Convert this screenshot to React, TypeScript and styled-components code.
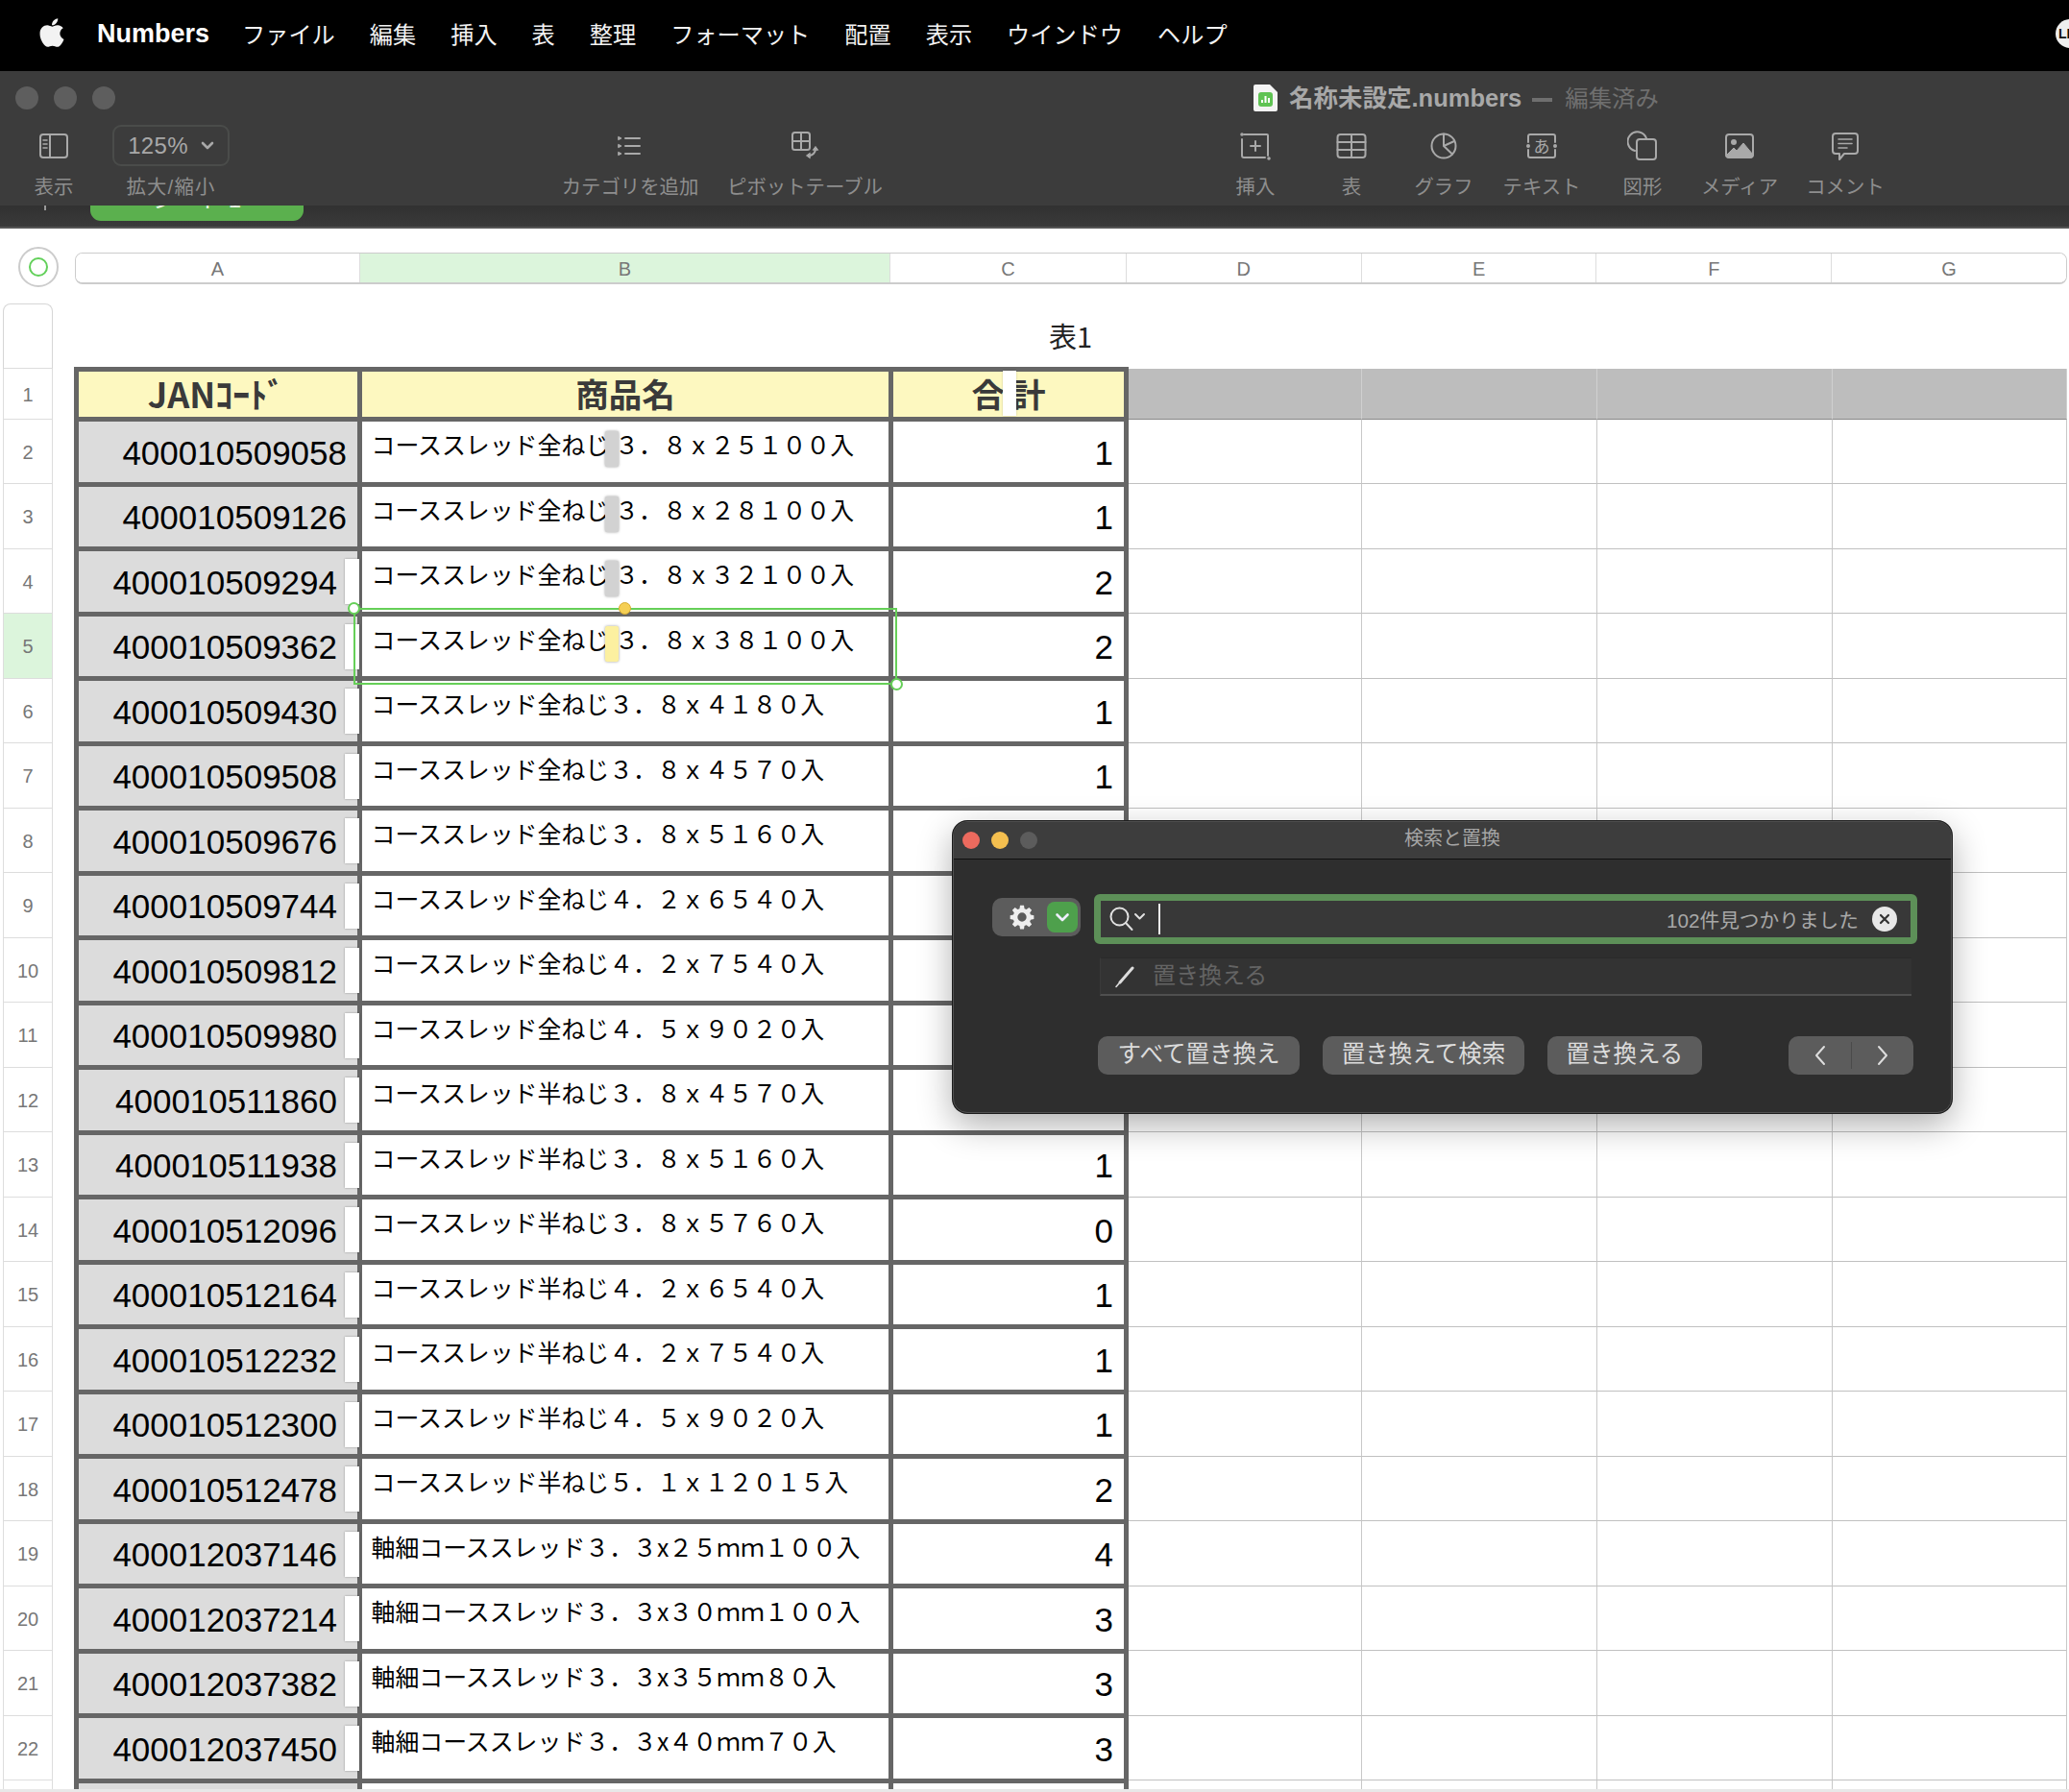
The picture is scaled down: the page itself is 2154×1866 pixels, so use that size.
import React from "react";
import styled, {createGlobalStyle} from "styled-components";
import {FaApple} from "react-icons/fa";

const UI_FONT = `"Liberation Sans", "Noto Sans CJK JP", sans-serif`;
const CJK_FONT = `"Noto Sans CJK JP", "Liberation Sans", sans-serif`;

const GlobalStyle = createGlobalStyle`
  html, body {
    margin: 0;
    padding: 0;
    background: #fff;
    font-family: ${UI_FONT};
  }
`;

const Page = styled.div`
  position: relative;
  width: 2154px;
  height: 1866px;
  overflow: hidden;
  background: #fff;
`;

const MenuBar = styled.div`
  height: 74px;
  box-sizing: border-box;
  background: #000;
  display: flex;
  align-items: center;
  gap: 36px;
  padding: 0 0 6px 40px;
  color: #f2f2f2;
  font-size: 24.2px;
  position: relative;
  svg { margin: 0 -6px 0 -3px; }
`;

const AppName = styled.span`
  font-size: 27px;
  font-weight: 700;
  color: #fff;
  margin: 3px -2px 0 0;
`;

const UserBadge = styled.div`
  position: absolute;
  left: 2140px;
  top: 20px;
  width: 30px;
  height: 30px;
  border-radius: 50%;
  background: #eee;
  color: #111;
  font-size: 14px;
  font-weight: 700;
  line-height: 30px;
  padding-left: 3px;
  box-sizing: border-box;
`;

const Toolbar = styled.div`
  height: 140px;
  background: #3c3c3c;
  display: flex;
  flex-direction: column;
`;

const TitleRow = styled.div`
  height: 56px;
  display: flex;
  align-items: center;
  padding-left: 16px;
`;

const Light = styled.div<{$color: string; $size: number}>`
  width: ${p => p.$size}px;
  height: ${p => p.$size}px;
  border-radius: 50%;
  background: ${p => p.$color};
`;

const Lights = styled.div<{$gap: number}>`
  display: flex;
  gap: ${p => p.$gap}px;
`;

const DocTitle = styled.div`
  margin-left: 1185px;
  display: flex;
  align-items: center;
  gap: 12px;
  font-size: 25.5px;
  font-weight: 700;
  color: #a8a8a8;
`;

const DocName = styled.span`
  margin-top: -6px;
`;

const Edited = styled.span`
  font-size: 24.4px;
  font-weight: 400;
  color: #6f6f6f;
  margin-left: 13px;
`;

const Dash = styled.span`
  display: inline-block;
  width: 21px;
  height: 4px;
  background: #6f6f6f;
  margin-left: 11px;
  vertical-align: middle;
`;

const ToolRow = styled.div`
  display: flex;
  padding-left: 16px;
`;

const ToolItem = styled.div<{$w: number; $ml?: number}>`
  width: ${p => p.$w}px;
  margin-left: ${p => p.$ml ?? 0}px;
  display: flex;
  flex-direction: column;
  align-items: center;
  color: #aaa;
`;

const ToolSlot = styled.div`
  height: 43px;
  display: flex;
  align-items: center;
  justify-content: center;
`;

const ToolLabel = styled.div<{$spread?: boolean}>`
  margin-top: 10px;
  height: 24px;
  line-height: 24px;
  font-size: 20.4px;
  letter-spacing: ${p => (p.$spread ? 1.2 : 0)}px;
  color: #8e8e8e;
  white-space: nowrap;
`;

const ZoomBox = styled.div`
  width: 122px;
  height: 43px;
  box-sizing: border-box;
  border: 2px solid #4a4c4a;
  border-radius: 9px;
  display: flex;
  align-items: center;
  justify-content: center;
  gap: 13px;
`;

const ZoomValue = styled.span`
  font-size: 24px;
  letter-spacing: 0.3px;
  color: #a8a8a8;
`;

const TabStrip = styled.div`
  height: 22px;
  background: linear-gradient(#313131, #3a3a3a);
  border-bottom: 2px solid #555;
  display: flex;
  align-items: flex-start;
  overflow: hidden;
`;

const TabPlus = styled.div`
  width: 2px;
  height: 5px;
  margin-left: 46px;
  background: #999;
`;

const SheetTab = styled.div`
  width: 222px;
  height: 16px;
  margin-left: 46px;
  background: #5bb04e;
  border-radius: 0 0 11px 11px;
  overflow: hidden;
  text-align: center;
  color: #e8f5e4;
  font-size: 24px;
  line-height: 24px;
  span { display: block; margin-top: -18px; }
`;

const Sheet = styled.div`
  display: flex;
  flex-direction: column;
`;

const ColumnRow = styled.div`
  display: flex;
  align-items: flex-start;
  gap: 17px;
  padding: 19px 0 0 19px;
`;

const SelectAll = styled.div`
  width: 42px;
  height: 42px;
  box-sizing: border-box;
  border: 2px solid #ccc;
  border-radius: 50%;
  display: flex;
  align-items: center;
  justify-content: center;
  &::after {
    content: "";
    width: 20px;
    height: 20px;
    box-sizing: border-box;
    border: 2px solid #62d05a;
    border-radius: 50%;
  }
`;

const ColumnHeader = styled.div`
  display: flex;
  width: 2074px;
  height: 33px;
  margin-top: 6px;
  box-sizing: border-box;
  border: 1px solid #ccc;
  border-bottom-width: 2px;
  border-radius: 8px;
  overflow: hidden;
`;

const ColumnLabel = styled.div<{$w: number; $active?: boolean}>`
  width: ${p => p.$w}px;
  box-sizing: border-box;
  border-right: 1px solid #ddd;
  background: ${p => (p.$active ? "#dcf5dc" : "#fff")};
  text-align: center;
  font-size: 20px;
  line-height: 32px;
  color: #777;
  &:last-child { border-right: none; }
`;

const SheetBody = styled.div`
  display: flex;
  margin: 17px 0 0 3px;
`;

const RowHeader = styled.div`
  width: 52px;
  display: flex;
  flex-direction: column;
  flex: none;
`;

const RowCorner = styled.div`
  height: 68px;
  box-sizing: border-box;
  border: 1px solid #d6d6d6;
  border-bottom-color: #ddd;
  border-radius: 8px 8px 0 0;
`;

const RowLabel = styled.div<{$h: number; $active?: boolean}>`
  height: ${p => p.$h}px;
  box-sizing: border-box;
  border: 1px solid #ddd;
  border-top: none;
  padding-top: 3px;
  background: ${p => (p.$active ? "#dcf5dc" : "#fff")};
  display: flex;
  align-items: center;
  justify-content: center;
  font-size: 20px;
  color: #777;
`;

const Canvas = styled.div`
  margin-left: 22px;
  width: 2075px;
`;

const TableTitle = styled.div`
  height: 66px;
  display: flex;
  align-items: center;
  justify-content: center;
  font-family: ${CJK_FONT};
  font-size: 29px;
  color: #222;
`;

const Tables = styled.div`
  display: flex;
  align-items: flex-start;
  position: relative;
`;

const DataTable = styled.div`
  display: grid;
  grid-template-columns: 290px 548px 240px;
  grid-template-rows: 47px repeat(23, 62.5px);
  gap: 5px;
  padding: 5px;
  background: #666;
  flex: none;
`;

const HeadCell = styled.div<{$size?: number; $shift?: number}>`
  position: relative;
  background: #fdf8c0;
  display: flex;
  align-items: center;
  justify-content: center;
  padding: 0 ${p => p.$shift ?? 0}px 4px 0;
  box-sizing: border-box;
  font-family: ${CJK_FONT};
  font-size: ${p => p.$size ?? 34.5}px;
  font-weight: 700;
  color: #3a3a3a;
  white-space: pre;
`;

const HeadGap = styled.div`
  position: absolute;
  left: 114px;
  top: -1px;
  width: 14px;
  height: 47px;
  background: #fff;
  box-shadow: 0 0 2px rgba(0, 0, 0, .2);
`;

const CodeCell = styled.div<{$boxed: boolean}>`
  position: relative;
  box-sizing: border-box;
  background: #dcdcdc;
  display: flex;
  align-items: center;
  justify-content: flex-end;
  padding: 3px ${p => (p.$boxed ? 21 : 11)}px 0 0;
  font-size: 35px;
  color: #000;
`;

const CodeBox = styled.div`
  position: absolute;
  right: -2px;
  top: 8px;
  width: 15px;
  height: 47px;
  background: #fff;
  box-shadow: 0 0 2px rgba(0, 0, 0, .35);
`;

const NameCell = styled.div`
  background: #fff;
  padding: 5px 0 0 9.5px;
  font-family: ${CJK_FONT};
  font-size: 24.9px;
  font-weight: 400;
  line-height: 36px;
  color: #000;
  white-space: nowrap;
`;

const CharMark = styled.span<{$active: boolean}>`
  display: inline-block;
  position: relative;
  width: 6px;
  height: 0;
  &::after {
    content: "";
    position: absolute;
    left: -4px;
    top: -24px;
    width: 14px;
    height: 37px;
    border-radius: 2px;
    background: ${p => (p.$active ? "#fcf0a0" : "#d2d2d2")};
    box-shadow: 0 0 3px rgba(0, 0, 0, .4);
  }
`;

const TotalCell = styled.div`
  background: #fff;
  box-sizing: border-box;
  display: flex;
  align-items: center;
  justify-content: flex-end;
  padding: 3px 11px 0 0;
  font-size: 35px;
  color: #000;
`;

const EmptyGrid = styled.div`
  margin-top: 2px;
  display: grid;
  grid-template-columns: 243px 245px 245px 244px;
  grid-template-rows: 52.5px repeat(23, 67.5px);
  flex: none;
`;

const EmptyCell = styled.div<{$band: boolean}>`
  box-sizing: border-box;
  background: ${p => (p.$band ? "#bdbdbd" : "#fff")};
  border-right: 1px solid ${p => (p.$band ? "#d0d0d0" : "#c8c8c8")};
  border-bottom: ${p => (p.$band ? "1.5px solid #888" : "1px solid #c0c0c0")};
`;

const Selection = styled.div`
  position: absolute;
  left: 291px;
  top: 251px;
  width: 566px;
  height: 80px;
  box-sizing: border-box;
  border: 2px solid #66cf58;
`;

const Handle = styled.div<{$end?: boolean}>`
  position: absolute;
  width: 13px;
  height: 13px;
  box-sizing: border-box;
  border: 2px solid #66cf58;
  border-radius: 50%;
  background: #fff;
  left: ${p => (p.$end ? "auto" : "-8px")};
  right: ${p => (p.$end ? "-8px" : "auto")};
  top: ${p => (p.$end ? "auto" : "-8px")};
  bottom: ${p => (p.$end ? "-8px" : "auto")};
`;

const SelectionDot = styled.div`
  position: absolute;
  left: 274px;
  top: -8px;
  width: 11px;
  height: 11px;
  border: 1px solid #d8ac30;
  border-radius: 50%;
  background: #f5cf55;
`;

const BottomEdge = styled.div`
  position: absolute;
  left: 0;
  right: 0;
  bottom: 0;
  height: 3px;
  background: #e8e8e8;
`;

const Dialog = styled.div`
  position: absolute;
  left: 992px;
  top: 855px;
  width: 1040px;
  height: 304px;
  box-sizing: border-box;
  background: #2e2e2e;
  border-radius: 15px;
  border: 1px solid #4f4f4f;
  box-shadow: 0 0 0 1px #1c1c1c, 0 12px 36px rgba(0, 0, 0, .32);
  overflow: hidden;
`;

const DialogBar = styled.div`
  position: relative;
  height: 38px;
  background: #3d3d3d;
  border-bottom: 1px solid #101010;
  text-align: center;
  line-height: 35px;
  font-size: 20px;
  color: #a6a6a6;
`;

const DialogLights = styled(Lights)`
  position: absolute;
  left: 9px;
  top: 10px;
`;

const DialogBody = styled.div`
  padding: 36px 35px 0 40px;
`;

const SearchRow = styled.div`
  display: flex;
  gap: 14px;
  align-items: flex-start;
`;

const GearGroup = styled.div`
  margin-top: 4px;
  width: 92px;
  height: 40px;
  box-sizing: border-box;
  border-radius: 10px;
  background: #5c5c5c;
  display: flex;
  align-items: center;
  padding: 0 3px 0 17px;
  justify-content: space-between;
`;

const GreenDrop = styled.div`
  width: 32px;
  height: 32px;
  border-radius: 8px;
  background: #4ea04c;
  display: flex;
  align-items: center;
  justify-content: center;
`;

const SearchField = styled.div`
  width: 857px;
  height: 52px;
  box-sizing: border-box;
  border: 7px solid #5d9058;
  border-radius: 6px;
  background: #383838;
  display: flex;
  align-items: center;
  padding: 0 14px 0 9px;
`;

const Caret = styled.div`
  width: 2px;
  height: 32px;
  background: #eee;
  margin-left: 11px;
`;

const FoundCount = styled.div`
  margin-left: auto;
  font-size: 20.7px;
  color: #a8a8a8;
`;

const ClearButton = styled.div`
  width: 26px;
  height: 26px;
  margin-left: 14px;
  border-radius: 50%;
  background: #e8e8e8;
  display: flex;
  align-items: center;
  justify-content: center;
`;

const ReplaceField = styled.div`
  margin: 14px 6px 0 112px;
  height: 40px;
  box-sizing: border-box;
  background: #333;
  border-top: 1px solid #2a2a2a;
  border-bottom: 2px solid #4f4f4f;
  border-left: 1px solid #3a3a3a;
  display: flex;
  align-items: center;
  padding: 0 0 7px 14px;
  gap: 18px;
  font-size: 24px;
  color: #646464;
  svg { margin-top: 7px; }
`;

const ButtonRow = styled.div`
  margin: 42px 4px 0 110px;
  display: flex;
  gap: 24px;
`;

const DialogButton = styled.div<{$w: number}>`
  width: ${p => p.$w}px;
  height: 40px;
  border-radius: 10px;
  background: #5c5c5c;
  color: #dcdcdc;
  font-size: 24.5px;
  line-height: 37px;
  text-align: center;
  white-space: nowrap;
`;

const NavButton = styled.div`
  margin-left: auto;
  width: 130px;
  height: 40px;
  border-radius: 10px;
  background: #5c5c5c;
  display: flex;
  align-items: center;
  justify-content: space-around;
  position: relative;
  &::after {
    content: "";
    position: absolute;
    left: 65px;
    top: 6px;
    width: 1px;
    height: 28px;
    background: #4a4a4a;
  }
`;

const MENU = ["ファイル", "編集", "挿入", "表", "整理", "フォーマット", "配置", "表示", "ウインドウ", "ヘルプ"];

const COLUMNS: [string, number][] = [["A", 296], ["B", 553], ["C", 246], ["D", 245], ["E", 245], ["F", 245], ["G", 244]];

// [code, name, total]
const ROWS: [string, string, string][] = [
    ["400010509058", "３．８ｘ２５１００入", "1"],
    ["400010509126", "３．８ｘ２８１００入", "1"],
    ["400010509294", "３．８ｘ３２１００入", "2"],
    ["400010509362", "３．８ｘ３８１００入", "2"],
    ["400010509430", "コーススレッド全ねじ３．８ｘ４１８０入", "1"],
    ["400010509508", "コーススレッド全ねじ３．８ｘ４５７０入", "1"],
    ["400010509676", "コーススレッド全ねじ３．８ｘ５１６０入", "1"],
    ["400010509744", "コーススレッド全ねじ４．２ｘ６５４０入", "1"],
    ["400010509812", "コーススレッド全ねじ４．２ｘ７５４０入", "1"],
    ["400010509980", "コーススレッド全ねじ４．５ｘ９０２０入", "1"],
    ["400010511860", "コーススレッド半ねじ３．８ｘ４５７０入", "1"],
    ["400010511938", "コーススレッド半ねじ３．８ｘ５１６０入", "1"],
    ["400010512096", "コーススレッド半ねじ３．８ｘ５７６０入", "0"],
    ["400010512164", "コーススレッド半ねじ４．２ｘ６５４０入", "1"],
    ["400010512232", "コーススレッド半ねじ４．２ｘ７５４０入", "1"],
    ["400010512300", "コーススレッド半ねじ４．５ｘ９０２０入", "1"],
    ["400010512478", "コーススレッド半ねじ５．１ｘ１２０１５入", "2"],
    ["400012037146", "軸細コーススレッド３．３x２５ｍｍ１００入", "4"],
    ["400012037214", "軸細コーススレッド３．３x３０ｍｍ１００入", "3"],
    ["400012037382", "軸細コーススレッド３．３x３５ｍｍ８０入", "3"],
    ["400012037450", "軸細コーススレッド３．３x４０ｍｍ７０入", "3"],
    ["", "", ""],
];

const Stroke = (props: {w?: number; h?: number; children: React.ReactNode}) => (
    <svg width={props.w ?? 32} height={props.h ?? 32} viewBox={`0 0 ${props.w ?? 32} ${props.h ?? 32}`} fill="none"
         stroke="#a9a9a9" strokeWidth={2} strokeLinecap="round" strokeLinejoin="round">
        {props.children}
    </svg>
);

const TOOLS: {label: string; w: number; ml?: number; icon: React.ReactNode}[] = [
    {
        label: "カテゴリを追加", w: 180, ml: 306, icon: (
            <Stroke>
                <path d="M11 8h15M11 16h15M11 24h15" strokeWidth={2}/>
                <path d="M4 6.5l3 1.5-3 1.5zM4 14.5l3 1.5-3 1.5zM4 22.5l3 1.5-3 1.5z" fill="#a9a9a9" strokeWidth={1}/>
            </Stroke>
        )
    },
    {
        label: "ピボットテーブル", w: 184, icon: (
            <Stroke>
                <rect x="3" y="2" width="18" height="18" rx="2.5"/>
                <path d="M12 2v18M3 11h18"/>
                <path d="M27 19c0 4-3 7-7 7"/>
                <path d="M24.5 20l2.5-3.5 2.5 3.5zM21 23.5L17.5 26l3.5 2.5z" fill="#a9a9a9" strokeWidth={1}/>
            </Stroke>
        )
    },
    {
        label: "挿入", w: 100, ml: 327, icon: (
            <Stroke>
                <path d="M4 4h24a1 1 0 0 1 1 1v21M2 9v17a2 2 0 0 0 2 2h22"/>
                <path d="M16 11v10M11 16h10"/>
                <circle cx="2" cy="4" r=".8" fill="#a9a9a9"/>
                <circle cx="30" cy="29" r=".8" fill="#a9a9a9"/>
            </Stroke>
        )
    },
    {
        label: "表", w: 100, icon: (
            <Stroke>
                <rect x="1.5" y="4" width="29" height="24" rx="3"/>
                <path d="M1.5 12h29M1.5 20h29M16 4v24"/>
            </Stroke>
        )
    },
    {
        label: "グラフ", w: 92, icon: (
            <Stroke>
                <circle cx="16" cy="16" r="12.5"/>
                <path d="M16 3.5V16l9 8.5M16 16l11-5"/>
            </Stroke>
        )
    },
    {
        label: "テキスト", w: 112, icon: (
            <svg width="32" height="32" viewBox="0 0 32 32" fill="none" stroke="#a9a9a9" strokeWidth="2" strokeLinecap="round">
                <path d="M2 12V6a2 2 0 0 1 2-2h24a2 2 0 0 1 2 2v6M2 20v6a2 2 0 0 0 2 2h24a2 2 0 0 0 2-2v-6"/>
                <circle cx="2" cy="16" r="1" fill="#a9a9a9"/>
                <circle cx="30" cy="16" r="1" fill="#a9a9a9"/>
                <text x="16" y="23" textAnchor="middle" fontSize="17" fill="#a9a9a9" stroke="none" fontFamily={CJK_FONT}>あ</text>
            </svg>
        )
    },
    {
        label: "図形", w: 98, icon: (
            <Stroke>
                <path d="M8 21a10 10 0 1 1 12-13"/>
                <rect x="10" y="9" width="20" height="21" rx="3"/>
            </Stroke>
        )
    },
    {
        label: "メディア", w: 104, icon: (
            <Stroke>
                <rect x="2" y="4" width="28" height="24" rx="3"/>
                <circle cx="10" cy="12" r="3" fill="#a9a9a9" stroke="none"/>
                <path d="M2 26l8-8 3 3 7-8 10 12v1a2 2 0 0 1-2 2H4a2 2 0 0 1-2-2z" fill="#a9a9a9" strokeWidth={1}/>
            </Stroke>
        )
    },
    {
        label: "コメント", w: 116, icon: (
            <Stroke>
                <path d="M6 3h20a3 3 0 0 1 3 3v15a3 3 0 0 1-3 3H15l-5 6v-6H6a3 3 0 0 1-3-3V6a3 3 0 0 1 3-3z"/>
                <path d="M9 9h14M9 13.5h14M9 18h9" strokeWidth={1.6}/>
            </Stroke>
        )
    },
];

const GearIcon = () => (
    <svg width="28" height="28" viewBox="0 0 24 24" fill="#eee">
        <path fillRule="evenodd" d="M10.3 1.5h3.4l.5 2.9 1.7.7 2.4-1.7 2.4 2.4-1.7 2.4.7 1.7 2.9.5v3.4l-2.9.5-.7 1.7 1.7 2.4-2.4 2.4-2.4-1.7-1.7.7-.5 2.9h-3.4l-.5-2.9-1.7-.7-2.4 1.7-2.4-2.4 1.7-2.4-.7-1.7-2.9-.5v-3.4l2.9-.5.7-1.7-1.7-2.4 2.4-2.4 2.4 1.7 1.7-.7zM12 8a4 4 0 1 0 0 8 4 4 0 0 0 0-8z"/>
    </svg>
);

const App = () => (
    <Page>
        <GlobalStyle/>
        <MenuBar>
            <FaApple size={34} color="#f2f2f2"/>
            <AppName>Numbers</AppName>
            {MENU.map(m => <span key={m}>{m}</span>)}
            <UserBadge>LI</UserBadge>
        </MenuBar>
        <Toolbar>
            <TitleRow>
                <Lights $gap={16}>
                    <Light $color="#5e5e5e" $size={24}/>
                    <Light $color="#5e5e5e" $size={24}/>
                    <Light $color="#5e5e5e" $size={24}/>
                </Lights>
                <DocTitle>
                    <svg width="25" height="28" viewBox="0 0 25 28">
                        <path d="M2 0h15l8 8v18a2 2 0 0 1-2 2H2a2 2 0 0 1-2-2V2a2 2 0 0 1 2-2z" fill="#f4f4f4"/>
                        <rect x="5" y="8" width="15" height="15" rx="3" fill="#5fc353"/>
                        <path d="M9 19v-3M12.5 19v-7M16 19v-5" stroke="#fff" strokeWidth="2"/>
                    </svg>
                    <DocName>名称未設定.numbers<Dash/><Edited>編集済み</Edited></DocName>
                </DocTitle>
            </TitleRow>
            <ToolRow>
                <ToolItem $w={80}>
                    <ToolSlot>
                        <Stroke>
                            <rect x="2" y="4" width="28" height="24" rx="3"/>
                            <path d="M12 4v24"/>
                            <path d="M5 10h4M5 14h4M5 18h4" strokeWidth={1.6}/>
                        </Stroke>
                    </ToolSlot>
                    <ToolLabel>表示</ToolLabel>
                </ToolItem>
                <ToolItem $w={164}>
                    <ZoomBox>
                        <ZoomValue>125%</ZoomValue>
                        <svg width="14" height="10" viewBox="0 0 14 10" fill="none" stroke="#a9a9a9" strokeWidth="2.6" strokeLinecap="round" strokeLinejoin="round">
                            <path d="M2 2l5 5 5-5"/>
                        </svg>
                    </ZoomBox>
                    <ToolLabel $spread>拡大/縮小</ToolLabel>
                </ToolItem>
                {TOOLS.map(t => (
                    <ToolItem key={t.label} $w={t.w} $ml={t.ml}>
                        <ToolSlot>{t.icon}</ToolSlot>
                        <ToolLabel>{t.label}</ToolLabel>
                    </ToolItem>
                ))}
            </ToolRow>
        </Toolbar>
        <TabStrip>
            <TabPlus/>
            <SheetTab><span>シート 1</span></SheetTab>
        </TabStrip>
        <Sheet>
            <ColumnRow>
                <SelectAll/>
                <ColumnHeader>
                    {COLUMNS.map(([name, w]) => (
                        <ColumnLabel key={name} $w={w} $active={name === "B"}>{name}</ColumnLabel>
                    ))}
                </ColumnHeader>
            </ColumnRow>
            <SheetBody>
                <RowHeader>
                    <RowCorner/>
                    {Array.from({length: 23}, (_, i) => (
                        <RowLabel key={i} $h={i === 0 ? 52.7 : 67.5} $active={i === 4}>{i < 22 ? i + 1 : ""}</RowLabel>
                    ))}
                </RowHeader>
                <Canvas>
                    <TableTitle>表1</TableTitle>
                    <Tables>
                        <DataTable>
                            <HeadCell $size={36} $shift={4}>JANｺｰﾄﾞ</HeadCell>
                            <HeadCell>商品名</HeadCell>
                            <HeadCell>合 計<HeadGap/></HeadCell>
                            {ROWS.map(([code, name, total], i) => (
                                <React.Fragment key={i}>
                                    <CodeCell $boxed={i > 1}>
                                        {code}
                                        {i > 1 && <CodeBox/>}
                                    </CodeCell>
                                    <NameCell>
                                        {i < 4 && <>コーススレッド全ねじ<CharMark $active={i === 3}/></>}
                                        {name}
                                    </NameCell>
                                    <TotalCell>{total}</TotalCell>
                                </React.Fragment>
                            ))}
                        </DataTable>
                        <EmptyGrid>
                            {Array.from({length: 23 * 4}, (_, i) => <EmptyCell key={i} $band={i < 4}/>)}
                        </EmptyGrid>
                        <Selection>
                            <Handle/>
                            <SelectionDot/>
                            <Handle $end/>
                        </Selection>
                    </Tables>
                </Canvas>
            </SheetBody>
        </Sheet>
        <BottomEdge/>
        <Dialog>
            <DialogBar>
                <DialogLights $gap={12}>
                    <Light $color="#ec6a5e" $size={18}/>
                    <Light $color="#f4bf4f" $size={18}/>
                    <Light $color="#5c5c5c" $size={18}/>
                </DialogLights>
                検索と置換
            </DialogBar>
            <DialogBody>
                <SearchRow>
                    <GearGroup>
                        <GearIcon/>
                        <GreenDrop>
                            <svg width="16" height="11" viewBox="0 0 16 11" fill="none" stroke="#eef" strokeWidth="2.6" strokeLinecap="round" strokeLinejoin="round">
                                <path d="M2.5 2.5L8 8l5.5-5.5"/>
                            </svg>
                        </GreenDrop>
                    </GearGroup>
                    <SearchField>
                        <svg width="40" height="28" viewBox="0 0 40 28" fill="none" stroke="#e0e0e0" strokeWidth="2" strokeLinecap="round" strokeLinejoin="round">
                            <circle cx="10.5" cy="11.5" r="9"/>
                            <path d="M17 18l6.5 7"/>
                            <path d="M27 9l4.5 4.5L36 9"/>
                        </svg>
                        <Caret/>
                        <FoundCount>102件見つかりました</FoundCount>
                        <ClearButton>
                            <svg width="12" height="12" viewBox="0 0 12 12" stroke="#333" strokeWidth="2.2" strokeLinecap="round">
                                <path d="M2 2l8 8M10 2l-8 8"/>
                            </svg>
                        </ClearButton>
                    </SearchField>
                </SearchRow>
                <ReplaceField>
                    <svg width="22" height="24" viewBox="0 0 22 24" fill="none" stroke="#ddd" strokeLinecap="round">
                        <path d="M19 3L6 18" strokeWidth="3"/>
                        <path d="M5 19l-3 3.5" strokeWidth="1.6"/>
                    </svg>
                    置き換える
                </ReplaceField>
                <ButtonRow>
                    <DialogButton $w={210}>すべて置き換え</DialogButton>
                    <DialogButton $w={210}>置き換えて検索</DialogButton>
                    <DialogButton $w={161}>置き換える</DialogButton>
                    <NavButton>
                        <svg width="14" height="24" viewBox="0 0 14 24" fill="none" stroke="#ddd" strokeWidth="2" strokeLinecap="round" strokeLinejoin="round">
                            <path d="M11 3L3 12l8 9"/>
                        </svg>
                        <svg width="14" height="24" viewBox="0 0 14 24" fill="none" stroke="#ddd" strokeWidth="2" strokeLinecap="round" strokeLinejoin="round">
                            <path d="M3 3l8 9-8 9"/>
                        </svg>
                    </NavButton>
                </ButtonRow>
            </DialogBody>
        </Dialog>
    </Page>
);

export default App;
